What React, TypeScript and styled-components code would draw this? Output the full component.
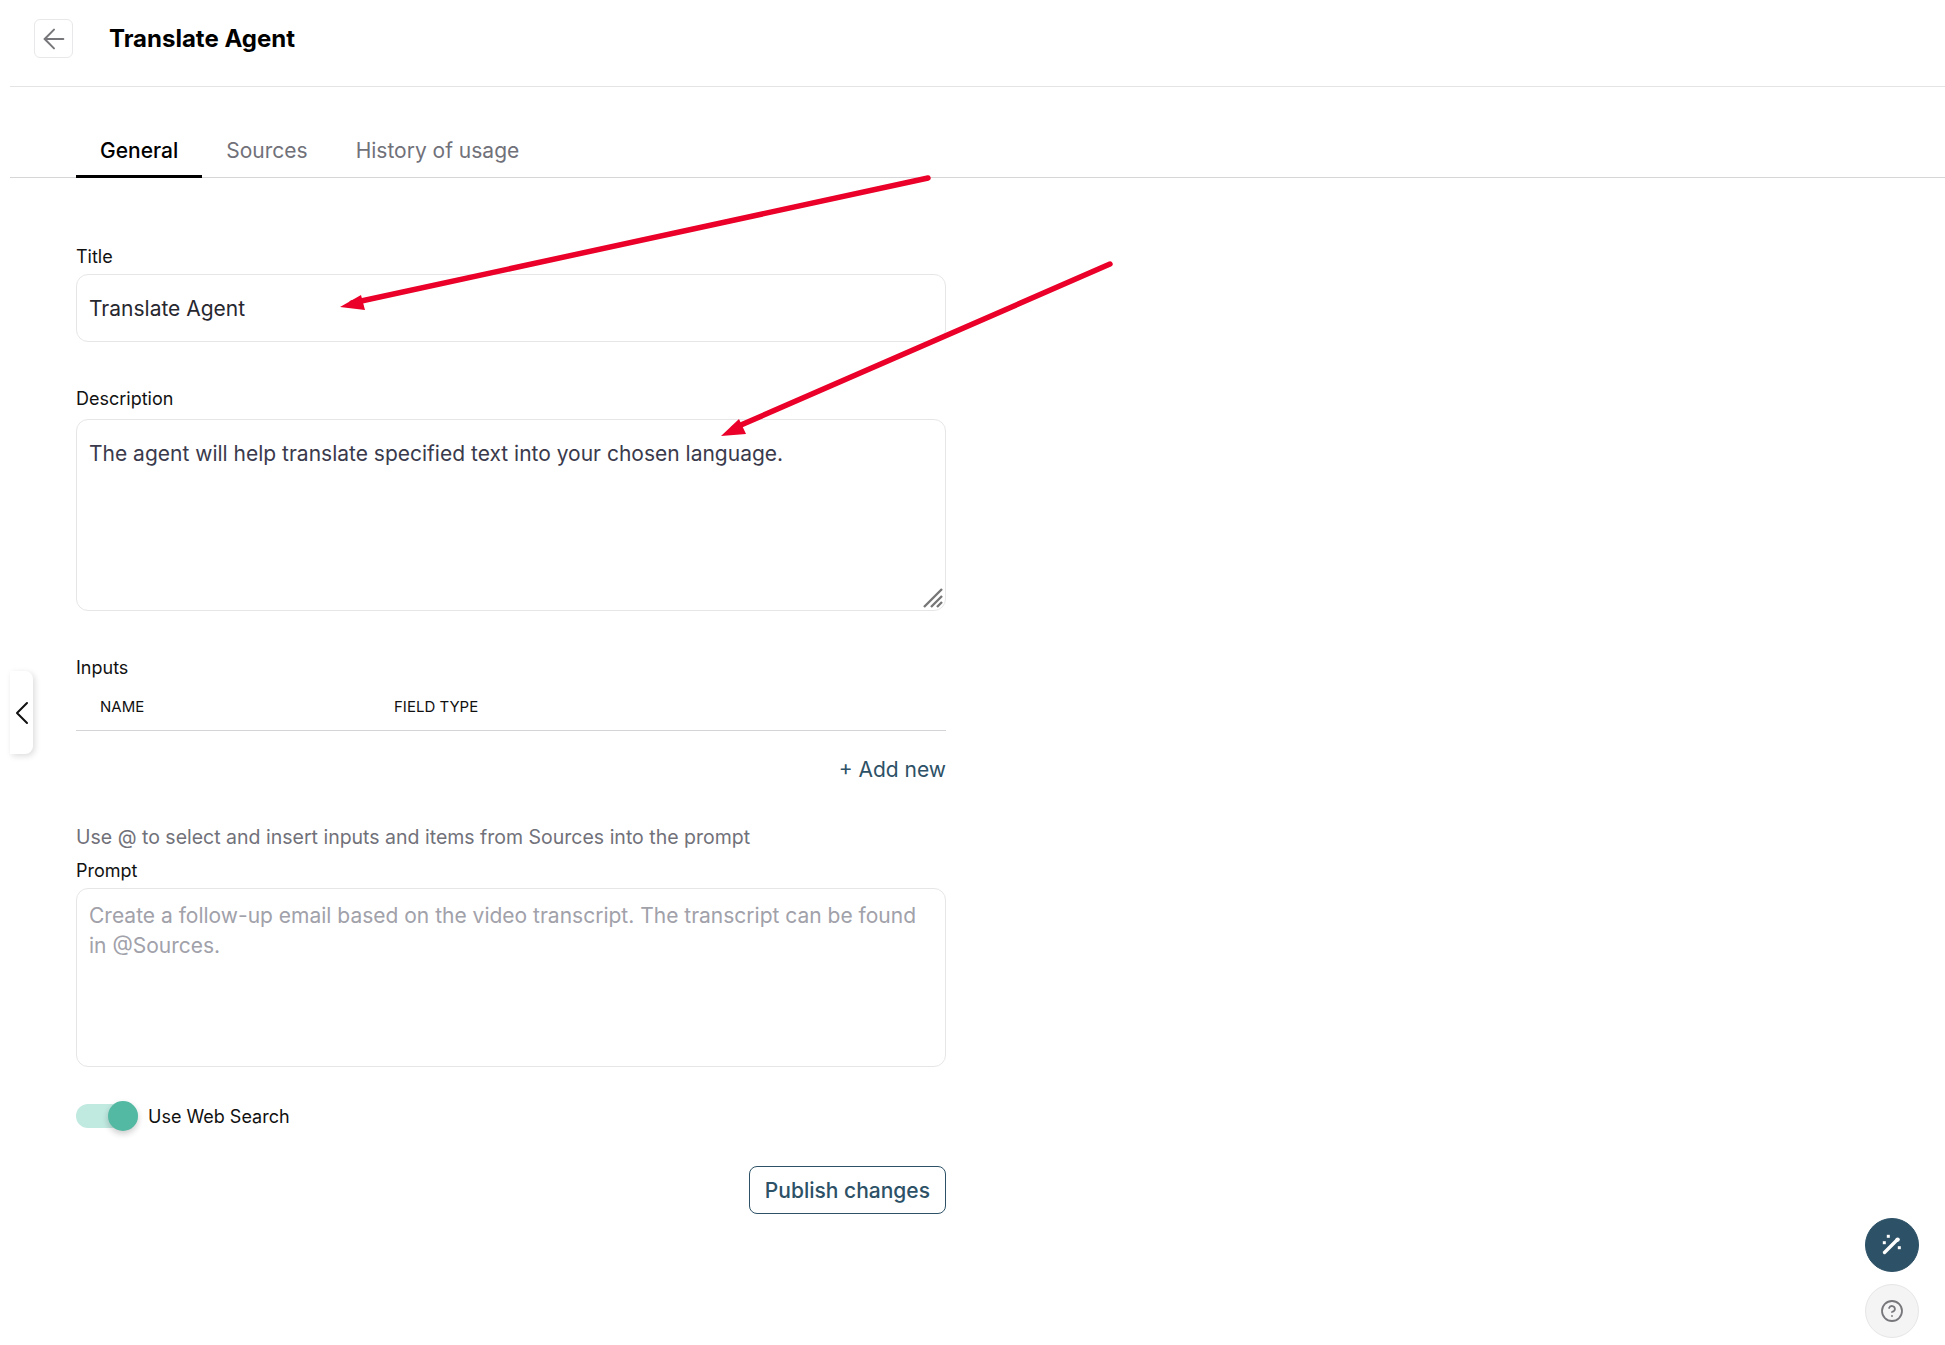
import React from 'react';
import styled, { createGlobalStyle } from 'styled-components';
import { ArrowLeft, ChevronLeft, CircleHelp } from 'lucide-react';

const GlobalStyle = createGlobalStyle`
  * { box-sizing: border-box; }
  html, body { margin: 0; padding: 0; height: 100%; background: #fff; }
  body { font-family: Inter, "Noto Sans", sans-serif; color: #111; overflow: hidden; }
`;

const Page = styled.div`
  position: relative;
  display: flex;
  height: 1345px;
  width: 1945px;
  overflow: hidden;
`;

const SideStrip = styled.div`
  width: 10px;
  flex: none;
  background: #fff;
  box-shadow: 1px 0 6px rgba(0, 0, 0, 0.12);
`;

const Main = styled.main`
  flex: 1;
  display: flex;
  flex-direction: column;
  background: #fff;
`;

const Header = styled.header`
  height: 87px;
  flex: none;
  display: flex;
  align-items: center;
  padding: 0 0 9px 24px;
  gap: 36px;
  border-bottom: 1px solid #e4e4e6;
`;

const BackButton = styled.button`
  width: 39px;
  height: 39px;
  display: flex;
  align-items: center;
  justify-content: center;
  padding: 0;
  background: #fff;
  color: #77777b;
  border: 1px solid #e8e8ea;
  border-radius: 6px;
`;

const Heading = styled.h1`
  margin: 0;
  font-size: 24px;
  line-height: 32px;
  font-weight: 700;
  color: #000;
`;

const Tabs = styled.nav`
  display: flex;
  height: 91px;
  flex: none;
  align-items: flex-end;
  padding-left: 66px;
  border-bottom: 1px solid #d6d6d8;
`;

const Tab = styled.div<{ $active?: boolean }>`
  padding: 0 24px 10px;
  margin-bottom: -1px;
  font-size: 21px;
  line-height: 29px;
  font-weight: ${(p) => (p.$active ? 500 : 400)};
  color: ${(p) => (p.$active ? '#000' : '#71717a')};
  border-bottom: 3px solid ${(p) => (p.$active ? '#000' : 'transparent')};
`;

const Form = styled.form`
  width: 936px;
  padding: 67px 0 0 66px;
  display: flex;
  flex-direction: column;
`;

const Label = styled.label`
  display: block;
  font-size: 18px;
  line-height: 24px;
  margin-bottom: 5px;
  color: #111;
`;

const TextInput = styled.input`
  display: block;
  width: 100%;
  height: 68px;
  padding: 0 12px;
  font: inherit;
  font-size: 21px;
  color: #27272f;
  border: 1px solid #e6e6e8;
  border-radius: 12px;
  outline: none;
  margin-bottom: 45px;
`;

const AreaWrap = styled.div`
  position: relative;
  margin-top: 3px;
`;

const TextArea = styled.textarea<{ $height: number; $top: number }>`
  display: block;
  width: 100%;
  height: ${(p) => p.$height}px;
  padding: ${(p) => p.$top}px 12px;
  font: inherit;
  font-size: 21px;
  line-height: 30px;
  color: #3a3a4c;
  border: 1px solid #e6e6e8;
  border-radius: 12px;
  outline: none;
  resize: none;
  &::placeholder { color: #a1a1aa; opacity: 1; }
`;

const Grip = styled.svg`
  position: absolute;
  right: 2px;
  bottom: 2px;
`;

const InputsLabel = styled(Label)`
  margin: 45px 0 0;
`;

const TableHead = styled.div`
  display: grid;
  grid-template-columns: 294px 1fr;
  height: 51px;
  padding: 15px 0 0 24px;
  font-size: 15px;
  line-height: 24px;
  color: #111;
  border-bottom: 1px solid #d4d4d8;
`;

const AddNew = styled.div`
  margin-top: 24px;
  text-align: right;
  font-size: 21px;
  line-height: 30px;
  color: #2d5166;
`;

const Hint = styled.p`
  margin: 37px 0 7px;
  font-size: 19.5px;
  line-height: 30px;
  color: #71717a;
`;

const SwitchRow = styled.div`
  display: flex;
  align-items: center;
  gap: 10px;
  margin-top: 33px;
  height: 32px;
  font-size: 18px;
`;

const SwitchTrack = styled.div`
  position: relative;
  width: 62px;
  height: 24px;
  border-radius: 12px;
  background: #c0e9e0;
`;

const SwitchKnob = styled.div`
  position: absolute;
  right: 0;
  top: -3px;
  width: 30px;
  height: 30px;
  border-radius: 50%;
  background: #53b9a3;
  box-shadow: 0 3px 6px rgba(0, 0, 0, 0.2);
`;

const Actions = styled.div`
  display: flex;
  justify-content: flex-end;
  margin-top: 34px;
`;

const PublishButton = styled.button`
  height: 48px;
  padding: 0 15px;
  font: inherit;
  font-size: 21px;
  font-weight: 500;
  color: #2d5166;
  background: #fff;
  border: 1px solid #2d5166;
  border-radius: 8px;
`;

const DrawerHandle = styled.div`
  position: absolute;
  left: 10px;
  top: 671px;
  width: 23px;
  height: 83px;
  display: flex;
  align-items: center;
  justify-content: center;
  color: #111;
  background: #fff;
  border-radius: 0 8px 8px 0;
  box-shadow: 2px 2px 6px rgba(0, 0, 0, 0.14);
  svg { flex: none; }
`;

const Fab = styled.div<{ $primary?: boolean }>`
  position: absolute;
  left: 1865px;
  top: ${(p) => (p.$primary ? 1218 : 1284)}px;
  width: 54px;
  height: 54px;
  display: flex;
  align-items: center;
  justify-content: center;
  border-radius: 50%;
  color: ${(p) => (p.$primary ? '#fff' : '#77777b')};
  background: ${(p) => (p.$primary ? '#2d5166' : '#f4f4f5')};
  border: 1px solid ${(p) => (p.$primary ? '#2d5166' : '#e6e6e8')};
`;

const Annotations = styled.svg`
  position: absolute;
  left: 0;
  top: 0;
  pointer-events: none;
`;

const WandIcon = () => (
  <svg width="24" height="24" viewBox="-12 -12 24 24" fill="#fff">
    <path d="M-7.5 7.5 5 -5" stroke="#fff" strokeWidth="3.4" strokeLinecap="round" />
    <circle cx="5.6" cy="-5.4" r="2.2" />
    <rect x="-5.2" y="-10.2" width="3" height="3" />
    <rect x="-9.2" y="-3.8" width="3" height="3" />
    <rect x="5.8" y="1.2" width="3" height="3" />
  </svg>
);

const App = () => (
  <Page>
    <GlobalStyle />
    <SideStrip />
    <Main>
      <Header>
        <BackButton type="button">
          <ArrowLeft size={32} strokeWidth={1.5} />
        </BackButton>
        <Heading>Translate Agent</Heading>
      </Header>
      <Tabs>
        <Tab $active>General</Tab>
        <Tab>Sources</Tab>
        <Tab>History of usage</Tab>
      </Tabs>
      <Form>
        <Label>Title</Label>
        <TextInput readOnly value="Translate Agent" />
        <Label>Description</Label>
        <AreaWrap>
          <TextArea
            $height={192}
            $top={19}
            readOnly
            value="The agent will help translate specified text into your chosen language."
          />
          <Grip width="22" height="22" viewBox="0 0 22 22" stroke="#777" strokeWidth="2.4">
            <path d="M2 20 20 2M9 20 20 9M15 20 20 15" />
          </Grip>
        </AreaWrap>
        <InputsLabel>Inputs</InputsLabel>
        <TableHead>
          <span>NAME</span>
          <span>FIELD TYPE</span>
        </TableHead>
        <AddNew>+ Add new</AddNew>
        <Hint>Use @ to select and insert inputs and items from Sources into the prompt</Hint>
        <Label>Prompt</Label>
        <TextArea
          $height={179}
          $top={12}
          readOnly
          placeholder="Create a follow-up email based on the video transcript. The transcript can be found in @Sources."
        />
        <SwitchRow>
          <SwitchTrack>
            <SwitchKnob />
          </SwitchTrack>
          <span>Use Web Search</span>
        </SwitchRow>
        <Actions>
          <PublishButton type="button">Publish changes</PublishButton>
        </Actions>
      </Form>
    </Main>
    <DrawerHandle>
      <ChevronLeft size={40} strokeWidth={1.2} />
    </DrawerHandle>
    <Fab $primary>
      <WandIcon />
    </Fab>
    <Fab>
      <CircleHelp size={24} strokeWidth={1.8} />
    </Fab>
    <Annotations width="1945" height="1345" viewBox="0 0 1945 1345">
      <g stroke="#ea0029" strokeWidth="5.5" strokeLinecap="round" fill="none">
        <path d="M928 178 352 303" />
        <path d="M1110 264 734 428" />
      </g>
      <path d="M340 307 361 295 365 310Z" fill="#ea0029" />
      <path d="M721 436 739 419 746 434Z" fill="#ea0029" />
    </Annotations>
  </Page>
);

export default App;
